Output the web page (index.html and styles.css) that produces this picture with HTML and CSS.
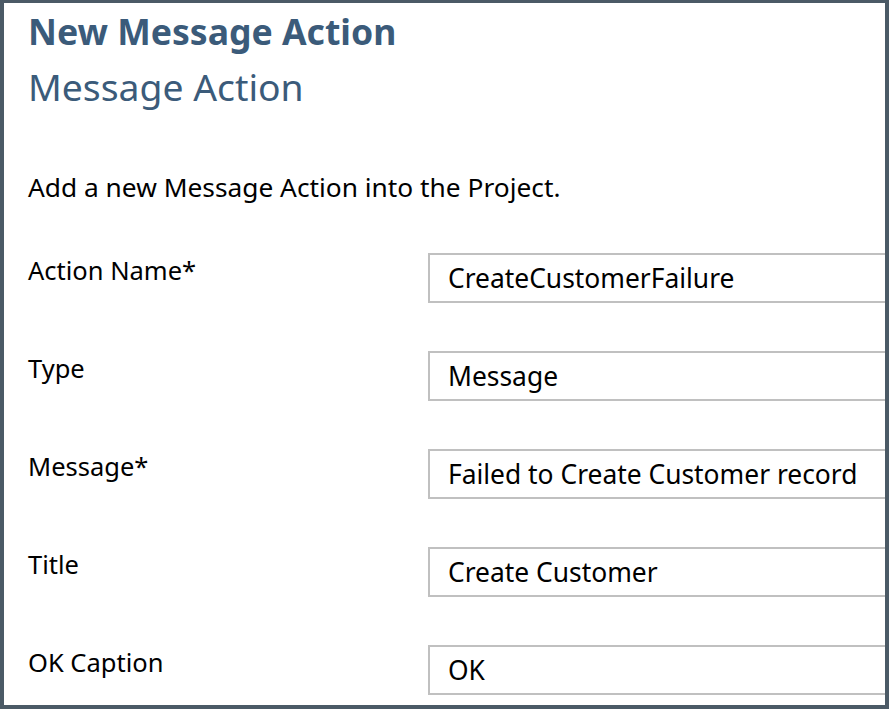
FILE: index.html
```html
<!DOCTYPE html>
<html>
<head>
<meta charset="utf-8">
<link rel="stylesheet" href="styles.css">
</head>
<body>
<div class="frame">
  <div class="panel">
    <h1 class="title">New Message Action</h1>
    <h2 class="subtitle">Message Action</h2>
    <p class="desc">Add a new Message Action into the Project.</p>
    <div class="form">
      <div class="row"><div class="label">Action Name*</div><div class="input">CreateCustomerFailure</div></div>
      <div class="row"><div class="label">Type</div><div class="input">Message</div></div>
      <div class="row"><div class="label">Message*</div><div class="input">Failed to Create Customer record</div></div>
      <div class="row"><div class="label">Title</div><div class="input">Create Customer</div></div>
      <div class="row"><div class="label">OK Caption</div><div class="input">OK</div></div>
    </div>
  </div>
</div>
</body>
</html>
```
FILE: styles.css
```css
html, body {
  margin: 0;
  padding: 0;
  background: #4b5a66;
}
.frame {
  width: 889px;
  height: 709px;
  box-sizing: border-box;
  border: 4px solid #4b5a66;
  border-top-width: 3px;
  background: #4b5a66;
}
.panel {
  width: 100%;
  height: 100%;
  background: #ffffff;
  overflow: hidden;
  box-sizing: border-box;
  padding-left: 24px;
  font-family: "Noto Sans", sans-serif;
  color: #000;
}
.title {
  margin: 0;
  padding-top: 4px;
  font-size: 35.6px;
  line-height: 48px;
  font-weight: bold;
  color: #3b5b7a;
}
.subtitle {
  margin: 0;
  padding-top: 8px;
  font-size: 37.3px;
  line-height: 48px;
  font-weight: normal;
  color: #3b5b7a;
}
.desc {
  margin: 0;
  padding-top: 59px;
  font-size: 26.3px;
  line-height: 34px;
}
.form {
  display: flex;
  flex-direction: column;
  gap: 48px;
  padding-top: 49px;
}
.row {
  display: flex;
  align-items: flex-start;
}
.label {
  width: 400px;
  flex: none;
  font-size: 25.5px;
  line-height: 34px;
}
.input {
  flex: none;
  width: 500px;
  height: 50px;
  box-sizing: border-box;
  border: 2px solid #c0c0c0;
  padding-left: 18px;
  font-size: 26.4px;
  line-height: 46px;
}
```
